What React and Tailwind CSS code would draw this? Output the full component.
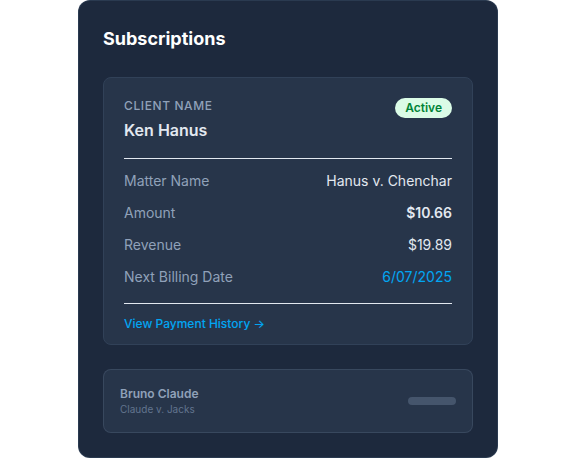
import React from 'react';

const rows = [
  { label: 'Matter Name', value: 'Hanus v. Chenchar', cls: 'text-slate-200' },
  { label: 'Amount', value: '$10.66', cls: 'text-slate-200 font-semibold' },
  { label: 'Revenue', value: '$19.89', cls: 'text-slate-200' },
  { label: 'Next Billing Date', value: '6/07/2025', cls: 'text-sky-500' },
];

const App = () => {
  return (
    <div className="flex justify-center bg-white min-h-[459px] font-['Inter',sans-serif]">
      <div className="w-[420px] h-[458px] bg-slate-800 border border-slate-700/70 rounded-xl p-6">
        <h2 className="text-lg font-bold text-white mb-6">Subscriptions</h2>

        {/* Active subscription */}
        <div className="bg-slate-700/50 border border-slate-700 rounded-lg px-5 pt-5 pb-3">
          <div className="flex items-start justify-between">
            <div>
              <div className="text-xs font-medium uppercase tracking-wider text-slate-400">Client Name</div>
              <div className="mt-1 text-base font-semibold text-slate-200">Ken Hanus</div>
            </div>
            <span className="h-5 px-2.5 flex items-center rounded-full bg-green-100 text-green-700 text-xs font-semibold">
              Active
            </span>
          </div>

          <div className="mt-4 border-t border-slate-200 pt-3 pb-4 space-y-3">
            {rows.map((r) => (
              <div key={r.label} className="flex justify-between text-sm leading-5">
                <span className="text-slate-400">{r.label}</span>
                <span className={r.cls}>{r.value}</span>
              </div>
            ))}
          </div>

          <div className="border-t border-slate-200 pt-3">
            <a className="text-xs font-medium text-sky-500 leading-4 block">View Payment History →</a>
          </div>
        </div>

        {/* Collapsed subscription */}
        <div className="mt-6 bg-slate-700/50 border border-slate-600/60 rounded-lg p-4 flex items-center justify-between">
          <div>
            <div className="text-xs font-semibold text-slate-400 leading-4">Bruno Claude</div>
            <div className="text-[10px] text-slate-500 leading-[14px]">Claude v. Jacks</div>
          </div>
          <div className="w-12 h-2 rounded-full bg-slate-600" />
        </div>
      </div>
    </div>
  );
};

export default App;
